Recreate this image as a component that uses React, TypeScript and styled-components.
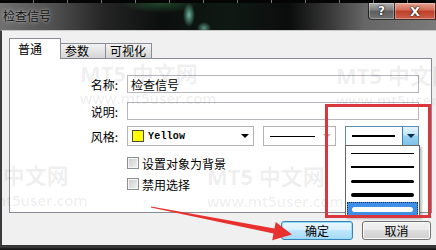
import React from "react";
import styled, { createGlobalStyle } from "styled-components";

const GlobalStyle = createGlobalStyle`
  html, body {
    margin: 0;
    padding: 0;
    background: #0c0f0d;
  }
  body {
    width: 436px;
    height: 250px;
    overflow: hidden;
  }
`;

const uiFont = `"Noto Sans CJK SC", "Microsoft YaHei", sans-serif`;

const Window = styled.div`
  position: relative;
  width: 436px;
  height: 250px;
  display: flex;
  flex-direction: column;
  overflow: hidden;
  font-family: ${uiFont};
  font-size: 12px;
  color: #000;
  background: #0c0f0d;
`;

// strip of the chart behind the dialog
const ChartStrip = styled.div`
  flex: none;
  height: 3px;
  background: repeating-linear-gradient(90deg, #050505 0 33px, #777 33px 34px);
`;

const TitleBar = styled.div`
  flex: none;
  height: 27px;
  display: flex;
  align-items: stretch;
  background:
    radial-gradient(ellipse 6px 12px at 189px 12px, rgba(140, 235, 205, 0.75), transparent),
    radial-gradient(ellipse 7px 6px at 204px 25px, rgba(140, 235, 205, 0.6), transparent),
    radial-gradient(ellipse 40px 10px at 160px 0px, rgba(60, 140, 80, 0.45), transparent),
    linear-gradient(90deg, #707070 0px, #4e4e4e 55px, #242424 105px, #0b0f0d 160px, #0f1914 230px, #0b0c0c 290px, #393939 330px, #666 365px, #7a7a7a 436px);
`;

const TitleText = styled.div`
  display: flex;
  align-items: center;
  padding: 0 0 2px 3px;
  font-size: 12px;
  color: #111;
  text-shadow: 0 0 5px rgba(255, 255, 255, 0.55), 0 0 2px rgba(255, 255, 255, 0.4);
`;

const CaptionButtons = styled.div`
  margin-left: auto;
  display: flex;
  align-self: flex-start;
`;

const CaptionButton = styled.div<{ $close?: boolean }>`
  width: ${(p) => (p.$close ? 41 : 27)}px;
  height: 17px;
  box-sizing: border-box;
  display: flex;
  align-items: center;
  justify-content: center;
  border: 1px solid rgba(20, 20, 20, 0.8);
  border-top: none;
  border-left: ${(p) => (p.$close ? "none" : "1px solid rgba(20,20,20,0.8)")};
  border-radius: ${(p) => (p.$close ? "0" : "0 0 0 4px")};
  background: ${(p) =>
    p.$close
      ? "linear-gradient(#e7a593, #d26a54 45%, #be3e2b 50%, #cf5f49)"
      : "linear-gradient(#b0b0b0, #7c7c7c 45%, #5e5e5e 50%, #727272)"};
  box-shadow: inset 0 0 0 1px rgba(255, 255, 255, 0.3);
  color: #fff;
  font-family: "DejaVu Sans", sans-serif;
  font-weight: bold;
  font-size: ${(p) => (p.$close ? 13 : 12)}px;
  text-shadow: 0 0 2px #000, 0 0 1px #000;
`;

const Client = styled.div`
  flex: 1;
  display: flex;
  flex-direction: column;
  background: #f0f0f0;
  border-left: 2px solid #3b3b3b;
  border-top: 1px solid #c9c9c9;
  padding: 7px 4px 0 7px;
`;

const TabStrip = styled.div`
  display: flex;
  align-items: flex-end;
  height: 21px;
  margin-bottom: -1px;
  position: relative;
  z-index: 1;
`;

const Tab = styled.div<{ $active?: boolean; $w: number }>`
  box-sizing: border-box;
  width: ${(p) => p.$w}px;
  height: ${(p) => (p.$active ? 21 : 15)}px;
  margin-bottom: ${(p) => (p.$active ? 0 : 1)}px;
  display: flex;
  align-items: center;
  padding-left: ${(p) => (p.$active ? 8 : 4)}px;
  border: 1px solid #898c95;
  border-bottom: none;
  border-left: ${(p) => (p.$active ? "1px solid #898c95" : "none")};
  background: ${(p) => (p.$active ? "#fff" : "linear-gradient(#f3f3f3, #e4e4e4 50%, #d5d5d5)")};
  font-size: 12px;
  line-height: 1;
`;

const Panel = styled.div`
  flex: none;
  box-sizing: border-box;
  height: 155px;
  background: #fff;
  border: 1px solid #898c95;
  padding: 16px 0 0 68px;
  display: flex;
  flex-direction: column;
`;

const Row = styled.div<{ $gap?: number; $h: number }>`
  display: flex;
  align-items: center;
  height: ${(p) => p.$h}px;
  margin-top: ${(p) => p.$gap ?? 0}px;
`;

const Label = styled.div`
  width: 40px;
  margin-right: 9px;
  text-align: right;
  font-size: 12px;
  white-space: nowrap;
`;

const TextBox = styled.div`
  box-sizing: border-box;
  width: 292px;
  height: 18px;
  border: 1px solid #b5b7bd;
  padding-left: 3px;
  display: flex;
  align-items: center;
  font-size: 12px;
`;

const Combos = styled.div`
  display: flex;
  gap: 9px;
`;

const Combo = styled.div<{ $w: number; $focus?: boolean }>`
  position: relative;
  box-sizing: border-box;
  width: ${(p) => p.$w}px;
  height: 20px;
  display: flex;
  align-items: center;
  border: 1px solid ${(p) => (p.$focus ? "#5b8fba" : "#b3b3b3")};
  background: #fff;
`;

const Swatch = styled.div<{ $color: string }>`
  width: 12px;
  height: 12px;
  box-sizing: border-box;
  margin-left: 4px;
  border: 1px solid #4a4a4a;
  background: ${(p) => p.$color};
`;

const ColorName = styled.span`
  margin-left: 4px;
  font-family: "Liberation Mono", monospace;
  font-weight: bold;
  font-size: 10px;
  letter-spacing: 0.2px;
`;

const LineSample = styled.div<{ $w: number; $t: number; $color?: string }>`
  width: ${(p) => p.$w}px;
  height: ${(p) => p.$t}px;
  background: ${(p) => p.$color ?? "#000"};
  border-radius: ${(p) => (p.$t > 2 ? p.$t / 2 : 0)}px;
`;

const ComboText = styled.div`
  margin-left: 6px;
  display: flex;
  align-items: center;
`;

const Caret = styled.div<{ $color: string }>`
  width: 0;
  height: 0;
  border-left: 4px solid transparent;
  border-right: 4px solid transparent;
  border-top: 4px solid ${(p) => p.$color};
`;

const CaretSlot = styled.div`
  margin-left: auto;
  width: 16px;
  height: 100%;
  display: flex;
  align-items: center;
  justify-content: center;
`;

const DropButton = styled.div`
  margin-left: auto;
  box-sizing: border-box;
  width: 16px;
  height: 100%;
  display: flex;
  align-items: center;
  justify-content: center;
  border-left: 1px solid #3c7fb1;
  background: linear-gradient(#e3f4fc, #bfe4f8 45%, #98d2f1 50%, #7fc2ea);
`;

const DropList = styled.div`
  position: absolute;
  top: 18px;
  left: -1px;
  width: 75px;
  box-sizing: border-box;
  border: 1px solid #646464;
  background: #fff;
  box-shadow: 2px 2px 2px rgba(0, 0, 0, 0.25);
  z-index: 2;
`;

const ListItem = styled.div<{ $selected?: boolean }>`
  height: 14px;
  margin: 0 1px;
  box-sizing: border-box;
  display: flex;
  align-items: center;
  justify-content: center;
  background: ${(p) => (p.$selected ? "#3f8ee8" : "transparent")};
  outline: ${(p) => (p.$selected ? "1px dotted #0d2c5c" : "none")};
  outline-offset: -1px;
`;

const CheckRow = styled.label`
  display: flex;
  align-items: center;
  gap: 3px;
  font-size: 12px;
`;

const CheckBox = styled.span`
  width: 12px;
  height: 12px;
  box-sizing: border-box;
  border: 1px solid #8e8f8f;
  background: linear-gradient(135deg, #c9c9c9, #f4f4f4);
  box-shadow: inset 0 0 0 1px #f6f6f6;
`;

const Footer = styled.div`
  display: flex;
  justify-content: flex-end;
  gap: 9px;
  margin-top: 8px;
  padding-right: 1px;
`;

const Button = styled.div<{ $default?: boolean; $w: number }>`
  box-sizing: border-box;
  width: ${(p) => p.$w}px;
  height: 19px;
  display: flex;
  align-items: center;
  justify-content: center;
  border-radius: 3px;
  border: 1px solid ${(p) => (p.$default ? "#3c7fb1" : "#707070")};
  background: ${(p) =>
    p.$default
      ? "linear-gradient(#eaf6fd, #d9f0fc 45%, #bee6fd 50%, #a7d9f5)"
      : "linear-gradient(#f2f2f2, #ebebeb 45%, #dddddd 50%, #cfcfcf)"};
  box-shadow: inset 0 0 0 1px ${(p) => (p.$default ? "#8fe0fb" : "#fcfcfc")};
  font-size: 12px;
`;

const BottomFrame = styled.div`
  flex: none;
  height: 5px;
  background: linear-gradient(#303030, #3c3c3c 40%, #0b0b0b);
`;

const Highlight = styled.div`
  position: absolute;
  left: 325px;
  top: 104px;
  width: 106px;
  height: 114px;
  box-sizing: border-box;
  border: 3px solid #d9363e;
  z-index: 5;
  pointer-events: none;
`;

const ArrowLayer = styled.svg`
  position: absolute;
  left: 0;
  top: 0;
  z-index: 6;
  pointer-events: none;
`;

const Watermark = styled.div<{ $x: number; $y: number }>`
  position: absolute;
  left: ${(p) => p.$x}px;
  top: ${(p) => p.$y}px;
  display: flex;
  flex-direction: column;
  align-items: flex-start;
  color: rgba(0, 0, 0, 0.075);
  font-family: "Open Sans", "Noto Sans CJK SC", sans-serif;
  font-weight: bold;
  white-space: nowrap;
  pointer-events: none;
  z-index: 4;
`;

const MarkBig = styled.div`
  font-size: 22px;
  line-height: 24px;
`;

const MarkSmall = styled.div`
  margin-top: 5px;
  font-size: 15px;
  font-weight: 600;
  line-height: 16px;
`;

const marks = [
  { x: 80, y: 61 },
  { x: 336, y: 63 },
  { x: -49, y: 163 },
  { x: 207, y: 164 },
];

const lineWidths = [1, 2, 3, 4];

export default function App() {
  return (
    <>
      <GlobalStyle />
      <Window>
        <ChartStrip />
        <TitleBar>
          <TitleText>检查信号</TitleText>
          <CaptionButtons>
            <CaptionButton>?</CaptionButton>
            <CaptionButton $close>X</CaptionButton>
          </CaptionButtons>
        </TitleBar>
        <Client>
          <TabStrip>
            <Tab $active $w={52}>普通</Tab>
            <Tab $w={45}>参数</Tab>
            <Tab $w={46}>可视化</Tab>
          </TabStrip>
          <Panel>
            <Row $h={18}>
              <Label>名称:</Label>
              <TextBox>检查信号</TextBox>
            </Row>
            <Row $h={18} $gap={9}>
              <Label>说明:</Label>
              <TextBox />
            </Row>
            <Row $h={20} $gap={6}>
              <Label>风格:</Label>
              <Combos>
                <Combo $w={127}>
                  <Swatch $color="#ffff00" />
                  <ColorName>Yellow</ColorName>
                  <CaretSlot>
                    <Caret $color="#000" />
                  </CaretSlot>
                </Combo>
                <Combo $w={73}>
                  <ComboText>
                    <LineSample $w={45} $t={1} />
                  </ComboText>
                  <CaretSlot>
                    <Caret $color="#b5b5b5" />
                  </CaretSlot>
                </Combo>
                <Combo $w={74} $focus>
                  <ComboText>
                    <LineSample $w={43} $t={2} />
                  </ComboText>
                  <DropButton>
                    <Caret $color="#0b2a4a" />
                  </DropButton>
                  <DropList>
                    {lineWidths.map((t) => (
                      <ListItem key={t}>
                        <LineSample $w={63} $t={t} />
                      </ListItem>
                    ))}
                    <ListItem $selected>
                      <LineSample $w={61} $t={5} $color="#fff" />
                    </ListItem>
                  </DropList>
                </Combo>
              </Combos>
            </Row>
            <Row $h={12} $gap={11}>
              <Label />
              <CheckRow>
                <CheckBox />
                设置对象为背景
              </CheckRow>
            </Row>
            <Row $h={12} $gap={9}>
              <Label />
              <CheckRow>
                <CheckBox />
                禁用选择
              </CheckRow>
            </Row>
          </Panel>
          <Footer>
            <Button $default $w={72}>确定</Button>
            <Button $w={69}>取消</Button>
          </Footer>
        </Client>
        <BottomFrame />

        {marks.map((m, i) => (
          <Watermark key={i} $x={m.x} $y={m.y}>
            <MarkBig>MT5 中文网</MarkBig>
            <MarkSmall>www.mt5user.com</MarkSmall>
          </Watermark>
        ))}

        <Highlight />
        <ArrowLayer width={436} height={250} viewBox="0 0 436 250">
          <polygon
            points="151.1,206.4 274.5,228.6 275.7,222 292,234.4 272.2,240.2 273.5,233.6 150.9,207.6"
            fill="#e8312f"
          />
        </ArrowLayer>
      </Window>
    </>
  );
}
